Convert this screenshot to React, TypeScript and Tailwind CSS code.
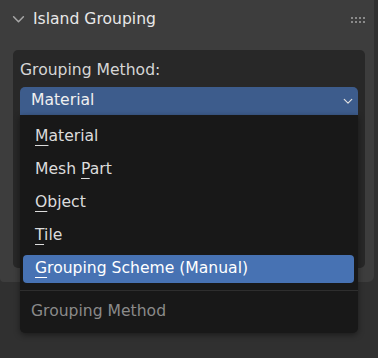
import React from "react";

const items = [
  { pre: "", key: "M", rest: "aterial" },
  { pre: "Mesh ", key: "P", rest: "art" },
  { pre: "", key: "O", rest: "bject" },
  { pre: "", key: "T", rest: "ile" },
  { pre: "", key: "G", rest: "rouping Scheme (Manual)", active: true },
];

function Chevron({ className }: { className?: string }) {
  return (
    <svg viewBox="0 0 12 8" className={className} fill="none">
      <path d="M1.5 1.5 6 6l4.5-4.5" stroke="currentColor" strokeWidth="1.4" strokeLinecap="round" strokeLinejoin="round" />
    </svg>
  );
}

export default function App() {
  return (
    <div
      className="relative w-[378px] h-[358px] overflow-hidden bg-[#303030] text-[15.6px] text-[#e6e6e6]"
      style={{ fontFamily: '"DejaVu Sans", sans-serif' }}
    >
      <div className="w-[374px] h-[282px] bg-[#3d3d3d] rounded-br-[6px] rounded-bl-[4px] flex flex-col">
        <div className="h-[39px] flex items-center pl-[12px] pr-[12px]">
          <Chevron className="w-[13px] h-[9px] text-[#a8a8a8]" />
          <span className="ml-[8px] text-[#e8e8e8]">Island Grouping</span>
          <div className="ml-auto grid grid-cols-4 gap-x-[2px] gap-y-[2px] mr-[-3px]">
            {Array.from({ length: 8 }).map((_, i) => (
              <div key={i} className="w-[2px] h-[2px] bg-[#8a8a8a]" />
            ))}
          </div>
        </div>
        <div className="ml-[13px] mt-[11px] w-[352px] h-[218px] bg-[#282828] rounded-[5px] px-[7px] pt-[10px]">
          <div className="text-[#d6d6d6] leading-[20px]">Grouping Method:</div>
          <div className="mt-[7px] h-[28px] bg-[#3d5c8c] rounded-t-[5px] flex items-center pl-[11px] pr-[5px] text-[#f0f0f0]">
            <span>Material</span>
            <Chevron className="ml-auto w-[10px] h-[7px] text-[#e0e0e0]" />
          </div>
        </div>
      </div>

      <div className="absolute left-[20px] top-[115px] w-[338px] h-[218px] bg-[#181818] rounded-b-[5px] shadow-[0_2px_6px_rgba(0,0,0,0.45)] pt-[5px] flex flex-col">
        {items.map((it) => (
          <div key={it.rest} className="h-[33px] flex items-center">
            <div
              className={
                it.active
                  ? "ml-[3px] mr-[4px] flex-1 h-[28px] rounded-[4px] bg-[#4772b3] flex items-center pl-[12px] text-[#ffffff]"
                  : "flex-1 flex items-center pl-[15px] text-[#dcdcdc]"
              }
            >
              <span>
                {it.pre}
                <span className="underline decoration-[1px] underline-offset-[4px]">{it.key}</span>
                {it.rest}
              </span>
            </div>
          </div>
        ))}
        <div className="mt-[5px] h-[1px] bg-[#2e2e2e]" />
        <div className="flex-1 flex items-center pl-[11px] text-[#8a8a8a]">Grouping Method</div>
      </div>
    </div>
  );
}
